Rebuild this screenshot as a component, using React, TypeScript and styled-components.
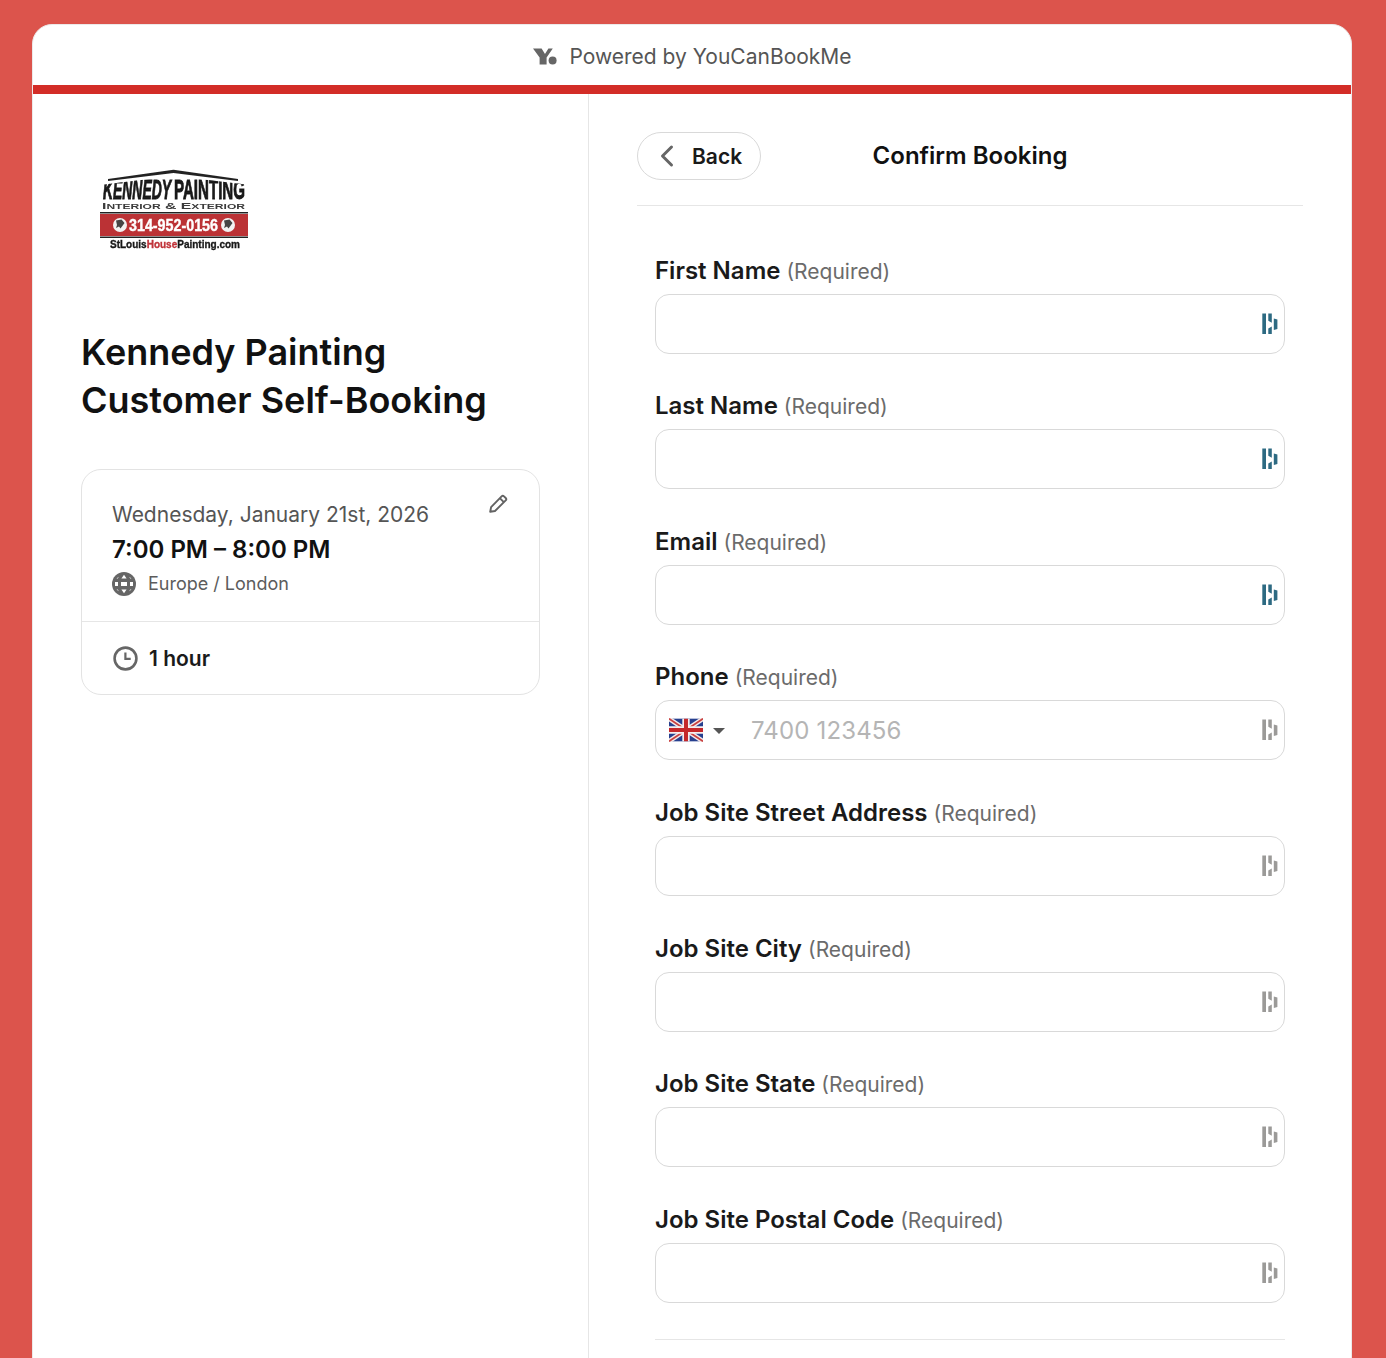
import React from "react";
import styled, { createGlobalStyle } from "styled-components";
import { ChevronLeft } from "lucide-react";

const Global = createGlobalStyle`
  html, body { margin: 0; padding: 0; height: 1358px; overflow: hidden; background: #dc544c; }
  * { box-sizing: border-box; }
  body { font-family: Inter, "Liberation Sans", sans-serif; color: #111; -webkit-font-smoothing: antialiased; }
`;

const Page = styled.div`
  height: 1358px;
  padding: 24px 34px 0 32px;
  overflow: hidden;
`;
const Card = styled.main`
  height: 1400px;
  background: #fff;
  border: 1px solid #eceaea;
  border-radius: 20px;
  display: flex;
  flex-direction: column;
  overflow: hidden;
`;
const PoweredBar = styled.header`
  height: 60px;
  flex: none;
  display: flex;
  align-items: center;
  justify-content: center;
  gap: 12px;
  color: #555;
  font-size: 21px;
  padding: 2px 0 0 1px;
`;
const AccentBar = styled.div`
  height: 9px;
  flex: none;
  background: #d32d27;
`;
const Columns = styled.div`
  flex: 1;
  display: flex;
`;
const LeftColumn = styled.section`
  width: 556px;
  flex: none;
  border-right: 1px solid #e6e6e6;
  padding: 61px 48px 0;
`;
const RightColumn = styled.section`
  flex: 1;
  padding: 38px 48px 0;
`;
const LogoWrap = styled.div`
  height: 110px;
  margin-bottom: 63px;
  svg { display: block; }
`;
const Title = styled.h1`
  margin: 0 0 45px;
  font-size: 36px;
  line-height: 48px;
  font-weight: 600;
  color: #111;
`;
const SummaryCard = styled.div`
  width: 459px;
  height: 226px;
  border: 1px solid #e3e3e3;
  border-radius: 20px;
  position: relative;
`;
const SummaryTop = styled.div`
  height: 152px;
  padding: 31px 30px 0;
  border-bottom: 1px solid #e6e6e6;
`;
const DateText = styled.div`
  font-size: 21px;
  line-height: 28px;
  color: #555;
`;
const TimeText = styled.div`
  font-size: 24px;
  line-height: 30px;
  font-weight: 600;
  color: #111;
  margin-top: 6px;
`;
const ZoneRow = styled.div`
  display: flex;
  align-items: center;
  gap: 12px;
  margin-top: 5px;
  font-size: 18px;
  line-height: 28px;
  color: #5c5c5c;
`;
const EditButton = styled.span`
  position: absolute;
  top: 24px;
  right: 31px;
  display: flex;
`;
const DurationRow = styled.div`
  height: 72px;
  display: flex;
  align-items: center;
  gap: 10px;
  padding-left: 30px;
  font-size: 21px;
  font-weight: 600;
  color: #1a1a1a;
`;
const TopBar = styled.div`
  position: relative;
  height: 74px;
  border-bottom: 1px solid #e6e6e6;
  display: flex;
  align-items: flex-start;
  justify-content: center;
`;
const BackButton = styled.button`
  position: absolute;
  left: 0;
  top: 0;
  width: 124px;
  height: 48px;
  border: 1px solid #d9d9d9;
  border-radius: 24px;
  background: #fff;
  display: flex;
  align-items: center;
  gap: 7px;
  padding: 0 0 0 11px;
  font: 600 21px Inter, sans-serif;
  color: #1a1a1a;
  svg { color: #666; flex: none; }
`;
const PageHeading = styled.h2`
  margin: 0;
  font-size: 24px;
  line-height: 48px;
  font-weight: 600;
  color: #111;
`;
const Form = styled.form`
  padding: 37.6px 18px 0;
`;
const Field = styled.div`
  height: 135.6px;
`;
const LabelRow = styled.label`
  display: flex;
  align-items: baseline;
  gap: 6px;
  height: 50px;
  line-height: 54px;
  font-size: 24px;
  font-weight: 600;
  color: #1a1a1a;
`;
const Required = styled.span`
  font-size: 21px;
  font-weight: 400;
  color: #6b6b6b;
`;
const InputShell = styled.div`
  position: relative;
  height: 60px;
  border: 1px solid #d9d9d9;
  border-radius: 14px;
  background: #fff;
  display: flex;
  align-items: center;
`;
const TextInput = styled.input`
  flex: 1;
  min-width: 0;
  height: 100%;
  border: 0;
  outline: 0;
  background: transparent;
  padding: 0 14px;
  border-radius: 14px;
  font: 400 24px Inter, sans-serif;
  &::placeholder { color: #b5b5b5; opacity: 1; }
`;
const PhoneInput = styled(TextInput)`
  padding-left: 26px;
  letter-spacing: 0.15px;
`;
const CountryPicker = styled.div`
  flex: none;
  display: flex;
  align-items: center;
  gap: 10px;
  padding-left: 13px;
  svg { display: block; }
`;
const Caret = styled.span`
  width: 0;
  height: 0;
  margin-top: 2px;
  border-left: 6px solid transparent;
  border-right: 6px solid transparent;
  border-top: 6px solid #555;
`;
const FillIcon = styled.span`
  position: absolute;
  right: 6px;
  top: 18px;
  display: flex;
`;
const BottomRule = styled.hr`
  margin: 10.6px 0 0;
  border: 0;
  border-top: 1px solid #e6e6e6;
`;

const YcbmMark = () => (
  <svg width="24" height="17" viewBox="0 0 24 17" aria-hidden="true">
    <path d="M0 0.500h8.600l3.400 5.400 3.400-5.400h4.400l-6.200 8.900v7.100h-7v-7.100z" fill="#666" />
    <circle cx="19.600" cy="12.600" r="4" fill="#666" />
  </svg>
);

const GlobeIcon = () => (
  <svg width="24" height="24" viewBox="0 0 24 24" aria-hidden="true">
    <circle cx="12" cy="12" r="12" fill="#666" />
    <g fill="#fff">
      <path d="M12 2.800l2.600 3.700H9.400z" />
      <path d="M6.800 4.800l-1 1.700H4.500zM17.200 4.800l1 1.700h1.300z" />
      <path d="M3 10h3v4H3zM9 10h6v4H9zM18 10h3v4h-3z" />
      <path d="M12 21.200l2.600-3.700H9.400z" />
      <path d="M6.800 19.200l-1-1.700H4.500zM17.200 19.200l1-1.700h1.300z" />
    </g>
  </svg>
);

const PencilIcon = () => (
  <svg width="19" height="19" viewBox="0 0 19 19" aria-hidden="true" fill="none" stroke="#636363" strokeWidth="1.900" strokeLinejoin="round">
    <path d="M1.200 17.800l0.900-4.700L12.600 2.300a1.700 1.700 0 0 1 2.400 0l1.700 1.700a1.700 1.700 0 0 1 0 2.400L6 17z" />
    <path d="M10.800 4.200l4 4" />
  </svg>
);

const ClockIcon = () => (
  <svg width="27" height="27" viewBox="0 0 27 27" aria-hidden="true">
    <circle cx="13.500" cy="13.500" r="10.900" fill="none" stroke="#666" strokeWidth="2.600" />
    <path d="M12.300 7.500h2.200v5.200h4.200v2.200h-6.400z" fill="#666" />
  </svg>
);

const Flag = () => (
  <svg width="34" height="24" viewBox="0 0 60 40" aria-hidden="true">
    <rect width="60" height="40" fill="#27408f" />
    <path d="M0 0l60 40M60 0L0 40" stroke="#f3e9ea" strokeWidth="8" />
    <path d="M0 0l60 40M60 0L0 40" stroke="#c9403f" strokeWidth="3" />
    <path d="M30 0v40M0 20h60" stroke="#f6eeee" strokeWidth="13" />
    <path d="M30 0v40M0 20h60" stroke="#c5282a" strokeWidth="7" />
  </svg>
);

const BarsIcon = ({ active }: { active: boolean }) => {
  const c = active ? "#2d6a82" : "#9b9a98";
  return (
    <svg width="16" height="22" viewBox="0 0 16 22" aria-hidden="true">
      <path d="M0.300 0.500h3.700v20.500H0.300z" fill={c} />
      <path d="M6.300 0.500h3.500v9.200l-3.500-2zM6.300 15.500l3.500-2V21H6.300z" fill={c} />
      <path d="M11.800 5.500l3.600 1v9.500l-3.600 1z" fill={c} />
    </svg>
  );
};

const narrow = "'Liberation Sans Narrow', 'Liberation Sans', sans-serif";

const Logo = () => (
  <svg width="185" height="110" viewBox="81 155 185 110" role="img" aria-label="Kennedy Painting logo">
    <defs>
      <clipPath id="roofClip">
        <path d="M100 185L174 176L250 185V201H100z" />
      </clipPath>
      <filter id="soft" x="-5%" y="-5%" width="110%" height="110%">
        <feGaussianBlur stdDeviation="0.4" />
      </filter>
    </defs>
    <g filter="url(#soft)">
      <path d="M108 179L173.500 169.800L238 179V181L173.500 173L108 181z" fill="#222" />
      <g clipPath="url(#roofClip)" fontFamily={narrow} fontWeight="700" fill="#1a1a1a" stroke="#1a1a1a" strokeWidth="1">
        <text x="103" y="199" fontSize="28" fontStyle="italic" textLength="68" lengthAdjust="spacingAndGlyphs">KENNEDY</text>
        <text x="174" y="199" fontSize="28" textLength="71" lengthAdjust="spacingAndGlyphs">PAINTING</text>
      </g>
      <text x="102" y="208.800" fontFamily="'Liberation Sans', sans-serif" fontWeight="700" fontSize="8.500" fill="#3a3a3a" textLength="143" lengthAdjust="spacingAndGlyphs">
        I<tspan fontSize="6.500">NTERIOR</tspan> &amp; E<tspan fontSize="6.500">XTERIOR</tspan>
      </text>
      <rect x="100" y="212" width="148" height="1.500" fill="#222" />
      <rect x="100" y="214" width="148" height="22" fill="#bb3235" />
      <rect x="100" y="236.500" width="148" height="1.500" fill="#222" />
      <circle cx="120" cy="225" r="7" fill="#f2f2f2" />
      <path d="M116 220.500l5.500-1 3 3.500-4 5.500-1.500-2-3 1.500 1-3z" fill="#444" />
      <circle cx="228" cy="225" r="7" fill="#f2f2f2" />
      <path d="M224 220.500l5.500-1 3 3.500-4 5.500-1.500-2-3 1.500 1-3z" fill="#444" />
      <text x="129" y="231" fontFamily={narrow} fontWeight="700" fontSize="16" fill="#fff" stroke="#fff" strokeWidth="0.400" textLength="89" lengthAdjust="spacingAndGlyphs">314-952-0156</text>
      <text x="110" y="248" fontFamily={narrow} fontWeight="700" fontSize="11" fill="#1a1a1a" stroke="#1a1a1a" strokeWidth="0.350" textLength="130" lengthAdjust="spacingAndGlyphs">
        StLouis<tspan fill="#c0343a" stroke="#c0343a">House</tspan>Painting.com
      </text>
    </g>
  </svg>
);

const fields: { name: string; active: boolean; phone?: boolean }[] = [
  { name: "First Name", active: true },
  { name: "Last Name", active: true },
  { name: "Email", active: true },
  { name: "Phone", active: false, phone: true },
  { name: "Job Site Street Address", active: false },
  { name: "Job Site City", active: false },
  { name: "Job Site State", active: false },
  { name: "Job Site Postal Code", active: false },
];

export default function App() {
  return (
    <Page>
      <Global />
      <Card>
        <PoweredBar>
          <YcbmMark />
          <span>Powered by YouCanBookMe</span>
        </PoweredBar>
        <AccentBar />
        <Columns>
          <LeftColumn>
            <LogoWrap>
              <Logo />
            </LogoWrap>
            <Title>
              Kennedy Painting
              <br />
              Customer Self-Booking
            </Title>
            <SummaryCard>
              <SummaryTop>
                <DateText>Wednesday, January 21st, 2026</DateText>
                <TimeText>7:00 PM – 8:00 PM</TimeText>
                <ZoneRow>
                  <GlobeIcon />
                  <span>Europe / London</span>
                </ZoneRow>
              </SummaryTop>
              <EditButton>
                <PencilIcon />
              </EditButton>
              <DurationRow>
                <ClockIcon />
                <span>1 hour</span>
              </DurationRow>
            </SummaryCard>
          </LeftColumn>
          <RightColumn>
            <TopBar>
              <BackButton type="button">
                <ChevronLeft size={36} strokeWidth={2} />
                <span>Back</span>
              </BackButton>
              <PageHeading>Confirm Booking</PageHeading>
            </TopBar>
            <Form>
              {fields.map((f) => (
                <Field key={f.name}>
                  <LabelRow>
                    {f.name} <Required>(Required)</Required>
                  </LabelRow>
                  <InputShell>
                    {f.phone ? (
                      <>
                        <CountryPicker>
                          <Flag />
                          <Caret />
                        </CountryPicker>
                        <PhoneInput placeholder="7400 123456" />
                      </>
                    ) : (
                      <TextInput />
                    )}
                    <FillIcon>
                      <BarsIcon active={f.active} />
                    </FillIcon>
                  </InputShell>
                </Field>
              ))}
              <BottomRule />
            </Form>
          </RightColumn>
        </Columns>
      </Card>
    </Page>
  );
}
